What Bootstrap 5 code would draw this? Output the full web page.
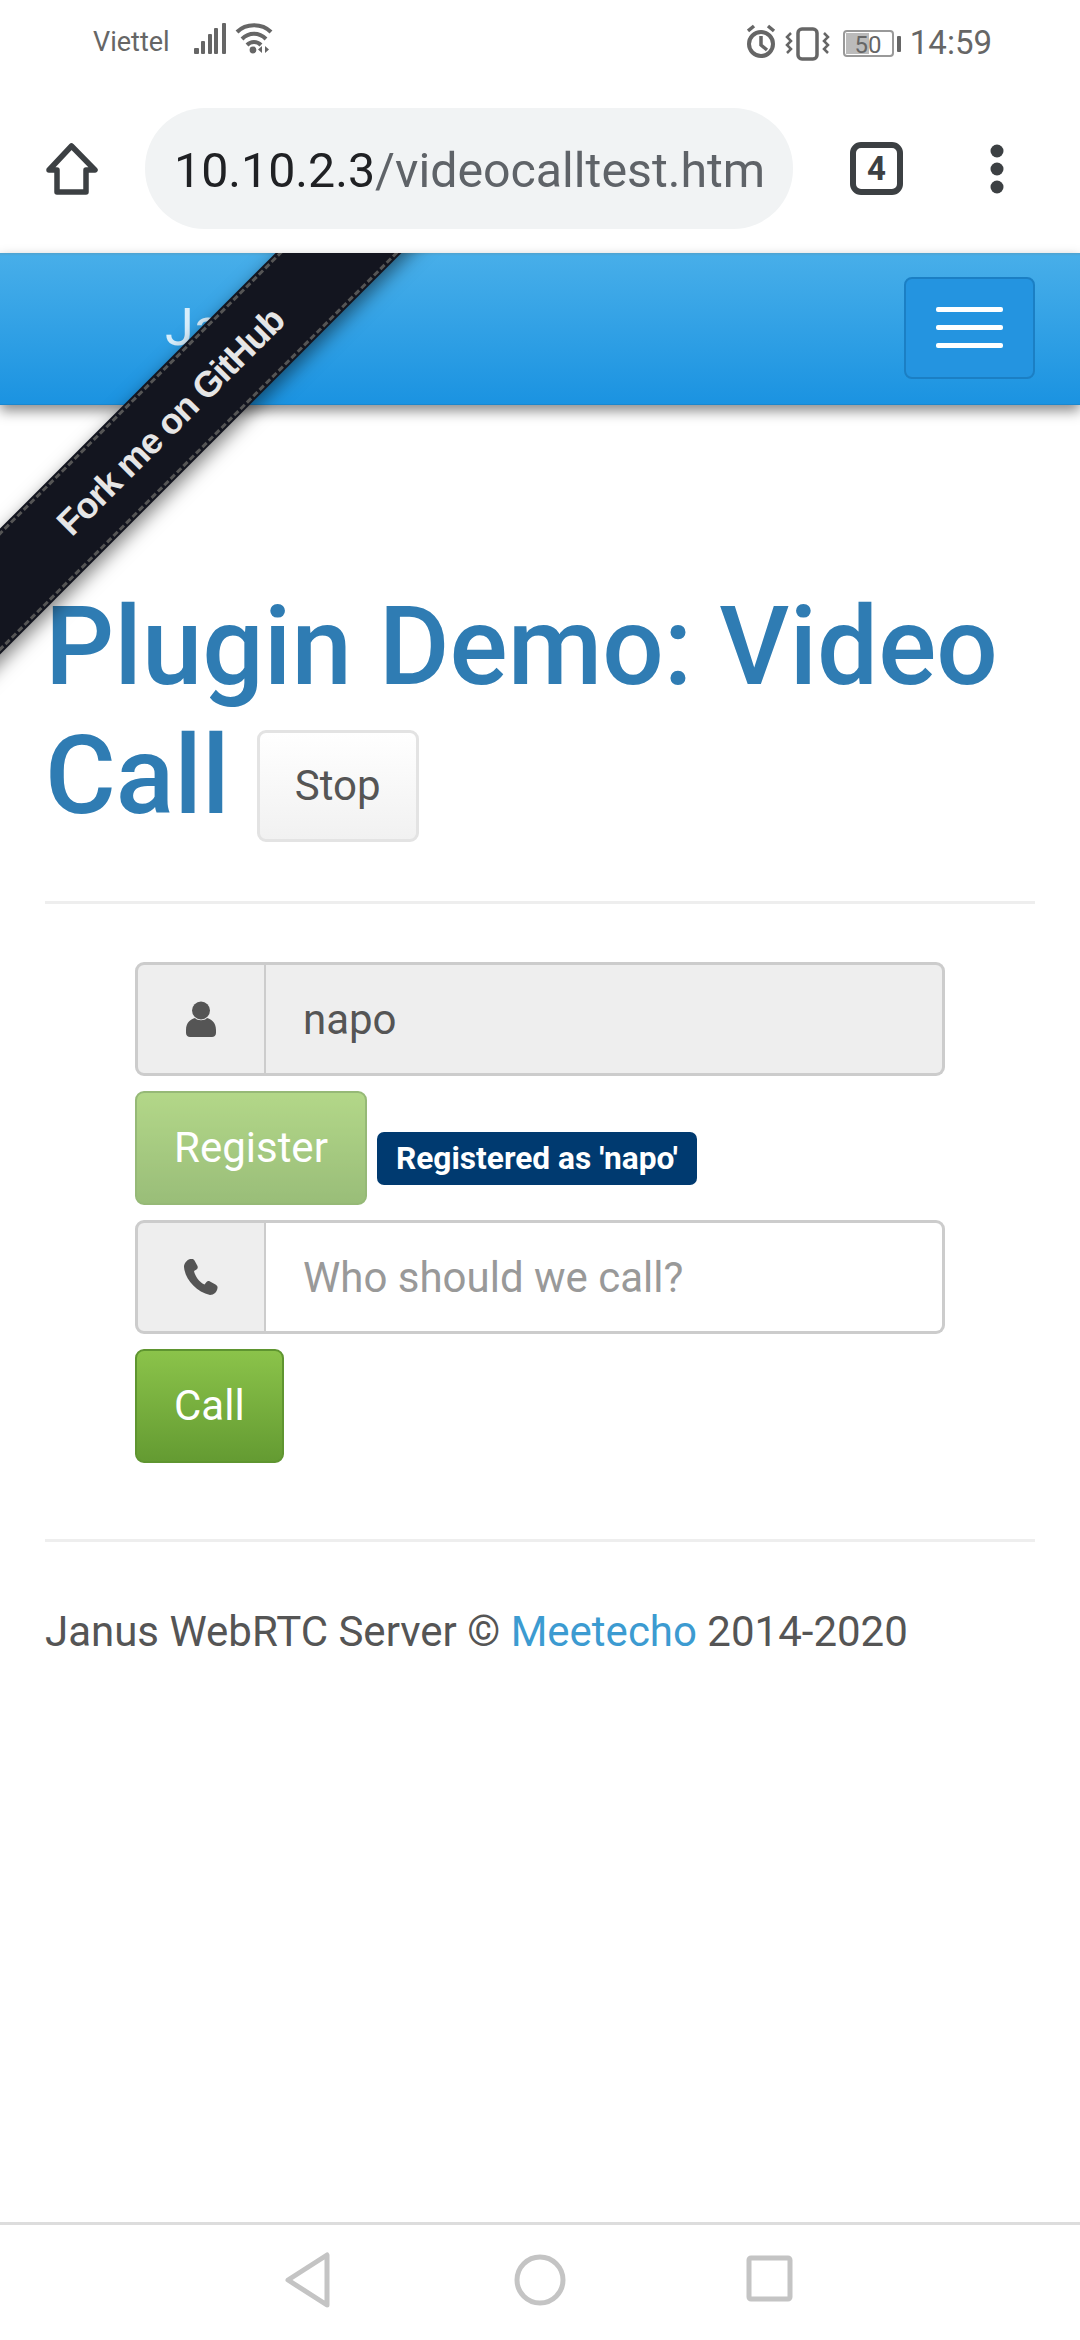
<!DOCTYPE html>
<html lang="en">
<head>
    <meta charset="UTF-8">
    <meta name="viewport" content="width=device-width, initial-scale=1.0">
    <title>Plugin Demo: Video Call</title>
    <link href="https://cdn.jsdelivr.net/npm/bootstrap@5.3.0/dist/css/bootstrap.min.css" rel="stylesheet">
    <style>
        html, body { height: 2340px; }
        body {
            font-family: Roboto, "Liberation Sans", sans-serif;
            color: #555;
            background: #fff;
            overflow: hidden;
            position: relative;
        }
        .status-line { height: 80px; padding: 5px 88px 0 93px; font-size: 27px; color: #666; }
        .status-time { font-size: 33px; margin-left: 5px; }
        .browser-bar { height: 173px; padding: 28px 0 24px 45px; }
        .url-pill {
            width: 648px; height: 121px; margin-left: 46px; margin-right: 57px;
            background: #f1f3f4; border-radius: 60px; padding: 5px 0 0 29px;
            font-size: 48.300px; color: #5f6368; white-space: nowrap;
        }
        .url-host { color: #202124; }
        .tab-count {
            width: 53px; height: 53px; border: 6px solid #3c4043; border-radius: 11px;
            font-size: 33px; font-weight: 700; color: #3c4043; margin-right: 87px;
        }
        .janus-nav {
            height: 152px; padding: 24px 45px 26px 165px;
            background: linear-gradient(to bottom, #4fa3d0 0, #47aee9 3px, #1b93e1 100%);
            border-bottom: 1px solid #1a87cf;
            box-shadow: 0 6px 12px rgba(0, 0, 0, .45);
        }
        .janus-brand { font-size: 52px; font-weight: 400; color: #d8eefb; padding: 0; margin: 0; }
        .janus-toggler {
            width: 131px; height: 102px; padding: 0; border: 2px solid #1b7fc4; border-radius: 8px;
            background: #2494e0;
            display: flex; flex-direction: column; justify-content: center; align-items: center; gap: 13px;
        }
        .janus-toggler i { display: block; width: 67px; height: 5px; background: #fff; border-radius: 2px; }

        .ribbon-clip { position: absolute; left: 0; top: 253px; width: 560px; height: 480px; overflow: hidden; pointer-events: none; }
        .ribbon-band {
            position: absolute; left: -174px; top: 128px; width: 680px; height: 89px; padding-left: 12px;
            transform: rotate(-45deg);
            background: #13151f; color: #e6e6e6;
            box-shadow: 0 6px 18px rgba(0, 0, 0, .5);
            font-family: "Liberation Sans", sans-serif;
            font-size: 36px; font-weight: 700; letter-spacing: -1.2px; line-height: 89px; text-align: center;
        }
        .ribbon-band::after {
            content: ""; position: absolute; left: 0; right: 0; top: 2px; bottom: 2px;
            border-top: 3px dashed #555; border-bottom: 3px dashed #555;
        }

        .page-body { padding: 0 45px; flex: 1 1 auto; }
        .demo-title {
            font-size: 108.500px; font-weight: 500; line-height: 129px; color: #2f7cb3;
            margin: 0; padding-top: 177px;
        }
        .btn-stop {
            font-size: 42px; color: #555; padding: 0; width: 162px; height: 112px;
            border: 3px solid #e3e3e3; border-radius: 9px; margin-left: 0;
            background: linear-gradient(to bottom, #fff, #f1f1f1);
            vertical-align: 13px; line-height: 1;
        }
        .rule-line { margin: 0; border: 0; border-top: 3px solid #eee; opacity: 1; }
        .call-form { padding: 0 90px; }
        .call-group { height: 114px; flex-wrap: nowrap; }
        .call-group .input-group-text {
            width: 132px; justify-content: center; padding: 0; background: #eee;
            border: 3px solid #ccc; border-radius: 9px 0 0 9px;
        }
        .call-group .form-control {
            font-size: 42px; color: #555; padding: 0 37px; height: 114px;
            border: 3px solid #ccc; border-left: 0; border-radius: 0 9px 9px 0; box-shadow: none;
            font-family: Roboto, sans-serif;
        }
        .call-group .form-control:disabled { background: #eee; opacity: 1; }
        .call-group .form-control::placeholder { color: #999; }
        .btn-green {
            font-size: 42px; color: #fff; height: 114px; padding: 0 37px;
            border: 2px solid #5f9530; border-radius: 9px; line-height: 1;
            background: linear-gradient(to bottom, #8bc34a, #649b32);
        }
        .btn-green:disabled { color: #fff; opacity: .65; border-color: #5f9530; background: linear-gradient(to bottom, #8bc34a, #649b32); }
        .reg-label {
            background: #003a70; color: #fff; font-size: 31.700px; font-weight: 700;
            height: 53px; line-height: 53px; padding: 0 19px; border-radius: 7px; margin: 0 0 20px 2px;
        }
        .foot-line { font-size: 42px; margin: 0; color: #555; }
        .foot-line a { color: #3c9bd1; text-decoration: none; }
        .soft-keys { height: 118px; border-top: 3px solid #ddd; }
    </style>
</head>
<body class="d-flex flex-column">
    <!-- barra de estado -->
    <div class="status-line d-flex align-items-center justify-content-between">
        <div class="d-flex align-items-center">
            <span>Viettel</span>
            <svg width="110" height="40" viewBox="0 0 110 40" style="margin-left:20px" fill="#666">
                <rect x="4" y="25" width="5" height="6" rx="1"/>
                <rect x="11" y="18" width="4" height="13" rx="1"/>
                <rect x="18" y="11" width="4" height="20" rx="1"/>
                <rect x="24" y="5" width="4" height="26" rx="1"/>
                <rect x="32" y="0" width="4" height="31" rx="1"/>
                <path d="M47 9C56 0 72 0 81 9M52 16C59 9 69 9 76 16M57 22C61 18 67 18 71 22" fill="none" stroke="#666" stroke-width="4"/>
                <circle cx="63" cy="27" r="3.4"/>
                <path d="M72 23v7l-4-3.500zM75 23v7l4-3.500z"/>
            </svg>
        </div>
        <div class="d-flex align-items-center">
            <svg width="158" height="40" viewBox="0 0 158 40">
                <g fill="none" stroke="#666">
                    <circle cx="14" cy="21" r="12" stroke-width="4"/>
                    <path d="M14 13v9l6 5M1 8l6-5M27 8l-6-5" stroke-width="3.500"/>
                    <rect x="51" y="6" width="19" height="30" rx="4" stroke-width="3.500"/>
                    <path d="M44 10l-4 4 4 4-4 4 4 4-4 4M77 10l4 4-4 4 4 4-4 4 4 4" stroke-width="2.500"/>
                    <rect x="97" y="8" width="49" height="25" rx="3" stroke="#999" stroke-width="2"/>
                </g>
                <rect x="99" y="10" width="23" height="21" fill="#bbb"/>
                <rect x="150" y="13" width="4" height="16" rx="1" fill="#666"/>
                <text x="121" y="30" text-anchor="middle" font-family="Roboto" font-size="24" fill="#666">50</text>
            </svg>
            <span class="status-time">14:59</span>
        </div>
    </div>

    <!-- barra del navegador -->
    <div class="browser-bar d-flex align-items-center">
        <svg width="54" height="54" viewBox="0 0 54 54" class="flex-shrink-0">
            <path d="M4 28L26.500 4L50 28H41V50H12V28Z" fill="none" stroke="#3c4043" stroke-width="5.500" stroke-linejoin="round"/>
        </svg>
        <div class="url-pill d-flex align-items-center overflow-hidden flex-shrink-0"><span class="url-host">10.10.2.3</span>/videocalltest.htm</div>
        <div class="tab-count d-flex align-items-center justify-content-center flex-shrink-0">4</div>
        <svg width="14" height="50" viewBox="0 0 14 50" class="flex-shrink-0" fill="#3c4043">
            <circle cx="7" cy="7" r="6.500"/><circle cx="7" cy="25" r="6.500"/><circle cx="7" cy="43" r="6.500"/>
        </svg>
    </div>

    <nav class="navbar janus-nav flex-nowrap">
        <a class="navbar-brand janus-brand" href="#">Janus</a>
        <button class="navbar-toggler janus-toggler" type="button" aria-label="Menu"><i></i><i></i><i></i></button>
    </nav>

    <div class="page-body">
        <h1 class="demo-title">Plugin Demo: Video Call <button class="btn btn-stop" type="button">Stop</button></h1>
        <hr class="rule-line" style="margin-top:59px">
        <div class="call-form" style="margin-top:58px">
            <div class="input-group call-group">
                <span class="input-group-text">
                    <svg width="30" height="36" viewBox="0 0 30 36" fill="#555">
                        <circle cx="15" cy="9.500" r="9"/>
                        <path d="M0 29C0 21 5 18 9 17C11 20 19 20 21 17C25 18 30 21 30 29V32C30 34.500 28 36 26 36H4C2 36 0 34.500 0 32Z"/>
                    </svg>
                </span>
                <input class="form-control" type="text" value="napo" disabled>
            </div>
            <div class="d-flex align-items-end gap-2" style="margin-top:15px">
                <button class="btn btn-green" type="button" disabled>Register</button>
                <span class="reg-label">Registered as 'napo'</span>
            </div>
            <div class="input-group call-group" style="margin-top:15px">
                <span class="input-group-text">
                    <svg width="34" height="36" viewBox="0 0 34 36" fill="#555">
                        <path d="M6 0C3 1 0 4 0 8C1 20 12 33 26 36C30 36 33 33 33.500 29C33.800 27.500 33 26.500 31.500 25.500L26 22.500C24.500 21.800 23.500 22 22.500 23L20.500 25.500C15 23 11 17 10 12L12.500 10.500C13.800 9.500 14 8.500 13.500 7L10.500 1.500C9.500 0 8 -0.500 6 0Z"/>
                    </svg>
                </span>
                <input class="form-control" type="text" placeholder="Who should we call?">
            </div>
            <div style="margin-top:15px">
                <button class="btn btn-green" type="button">Call</button>
            </div>
        </div>
        <hr class="rule-line" style="margin-top:76px">
        <p class="foot-line" style="margin-top:58px">Janus WebRTC Server © <a href="#">Meetecho</a> 2014-2020</p>
    </div>

    <!-- botones del sistema -->
    <div class="soft-keys d-flex align-items-start justify-content-center flex-shrink-0">
        <svg width="520" height="60" viewBox="0 0 520 60" style="margin-top:25px" fill="none" stroke="#c4c4c4" stroke-width="5" stroke-linejoin="round">
            <path d="M8 30L47 5V55Z"/>
            <ellipse cx="260" cy="30" rx="23" ry="23"/>
            <rect x="469" y="8" width="41" height="41" rx="2"/>
        </svg>
    </div>

    <div class="ribbon-clip"><div class="ribbon-band">Fork me on GitHub</div></div>
</body>
</html>
